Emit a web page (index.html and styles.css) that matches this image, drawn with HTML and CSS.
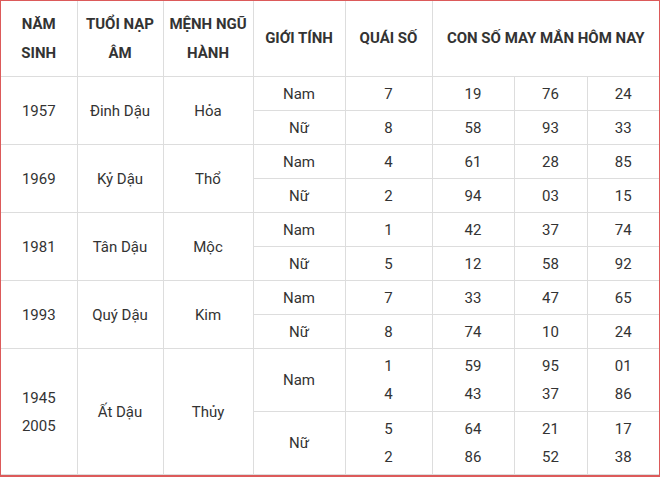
FILE: index.html
```html
<!DOCTYPE html>
<html lang="vi">
<head>
<meta charset="utf-8">
<title>Con số may mắn</title>
<link rel="stylesheet" href="styles.css">
</head>
<body>
<div class="frame">
<table class="lucky">
<colgroup>
<col class="c1"><col class="c2"><col class="c3"><col class="c4"><col class="c5"><col class="c6"><col class="c7"><col class="c8">
</colgroup>
<thead>
<tr class="head">
<th>NĂM<br>SINH</th>
<th>TUỔI NẠP<br>ÂM</th>
<th>MỆNH NGŨ<br>HÀNH</th>
<th>GIỚI TÍNH</th>
<th>QUÁI SỐ</th>
<th colspan="3">CON SỐ MAY MẮN HÔM NAY</th>
</tr>
</thead>
<tbody>
<tr class="r"><td rowspan="2">1957</td><td rowspan="2">Đinh Dậu</td><td rowspan="2">Hỏa</td><td>Nam</td><td>7</td><td>19</td><td>76</td><td>24</td></tr>
<tr class="r"><td>Nữ</td><td>8</td><td>58</td><td>93</td><td>33</td></tr>
<tr class="r"><td rowspan="2">1969</td><td rowspan="2">Kỷ Dậu</td><td rowspan="2">Thổ</td><td>Nam</td><td>4</td><td>61</td><td>28</td><td>85</td></tr>
<tr class="r"><td>Nữ</td><td>2</td><td>94</td><td>03</td><td>15</td></tr>
<tr class="r"><td rowspan="2">1981</td><td rowspan="2">Tân Dậu</td><td rowspan="2">Mộc</td><td>Nam</td><td>1</td><td>42</td><td>37</td><td>74</td></tr>
<tr class="r"><td>Nữ</td><td>5</td><td>12</td><td>58</td><td>92</td></tr>
<tr class="r"><td rowspan="2">1993</td><td rowspan="2">Quý Dậu</td><td rowspan="2">Kim</td><td>Nam</td><td>7</td><td>33</td><td>47</td><td>65</td></tr>
<tr class="r"><td>Nữ</td><td>8</td><td>74</td><td>10</td><td>24</td></tr>
<tr class="r2"><td rowspan="2">1945<br>2005</td><td rowspan="2">Ất Dậu</td><td rowspan="2">Thủy</td><td>Nam</td><td>1<br>4</td><td>59<br>43</td><td>95<br>37</td><td>01<br>86</td></tr>
<tr class="r2"><td>Nữ</td><td>5<br>2</td><td>64<br>86</td><td>21<br>52</td><td>17<br>38</td></tr>
</tbody>
</table>
</div>
</body>
</html>
```

FILE: styles.css
```css
html, body {
  margin: 0;
  padding: 0;
  background: #fff;
}
.frame {
  width: 658px;
  border: 1px solid #dc5a5a;
  border-bottom-width: 2px;
}
.lucky {
  width: 100%;
  table-layout: fixed;
  border-collapse: collapse;
  font-family: Roboto, "Liberation Sans", sans-serif;
  font-size: 15px;
  color: #333;
}
.c1 { width: 76px; }
.c2 { width: 86px; }
.c3 { width: 90px; }
.c4 { width: 92px; }
.c5 { width: 87px; }
.c6 { width: 82px; }
.c7 { width: 73px; }
.c8 { width: 72px; }
.lucky th, .lucky td {
  border: 1px solid #ddd;
  text-align: center;
  vertical-align: middle;
  padding: 0;
}
.lucky tr:first-child th { border-top: none; }
.lucky th:first-child, .lucky td:first-child { border-left: none; }
.lucky th:last-child, .lucky tr.r td:last-child, .lucky tr.r2 td:last-child { border-right: none; }
.lucky th {
  font-weight: bold;
  color: #333;
  line-height: 29px;
  height: 75px;
}
.lucky tr.r td {
  height: 33px;
  line-height: 24px;
}
.lucky tr.r2 td {
  height: 62px;
  line-height: 28px;
}
```
